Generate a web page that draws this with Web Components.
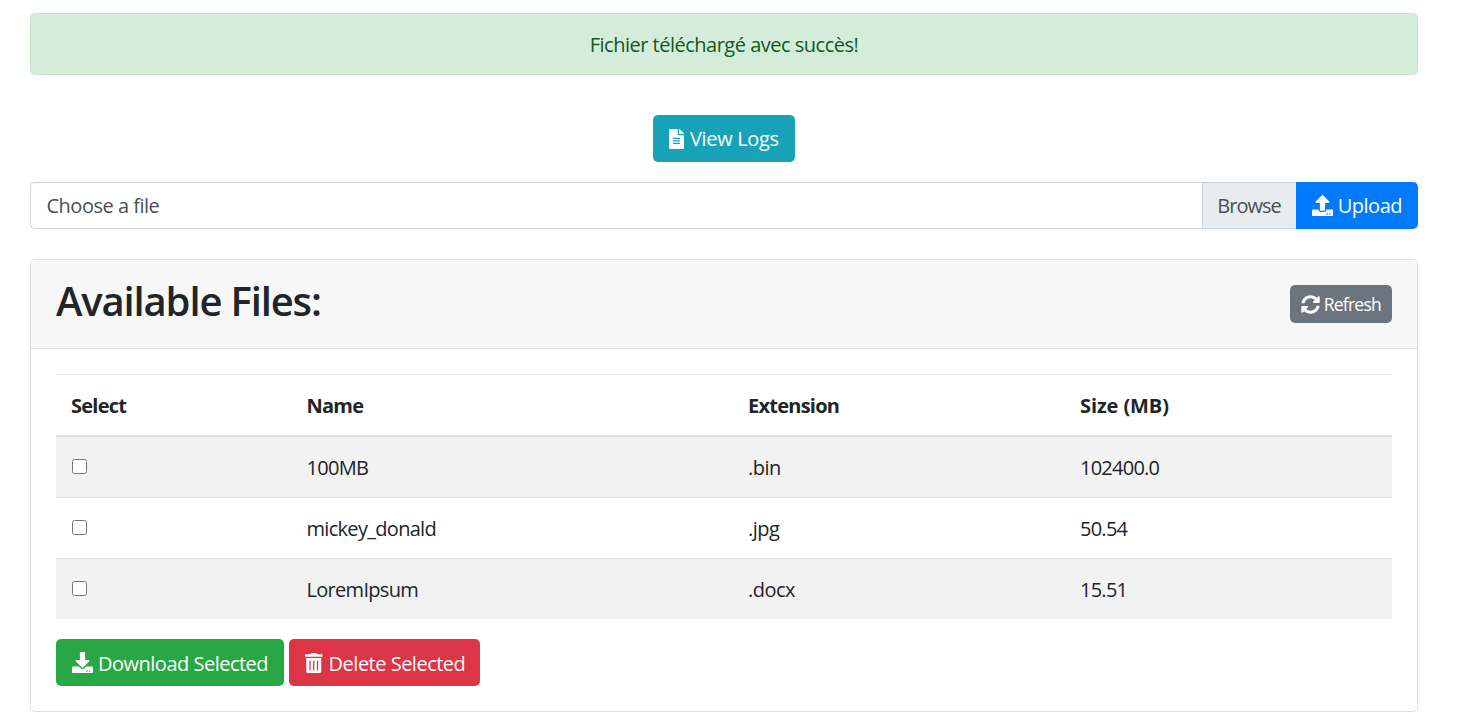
<!DOCTYPE html>
<html lang="en">
<head>
<meta charset="utf-8">
<title>Files</title>
<style>
  html, body { margin: 0; padding: 0; background: #fff; }
  body {
    padding: 13px 51px 16px 30px;
    font-family: "Open Sans", "Noto Sans", sans-serif;
    font-size: 20px;
    line-height: 30px;
    color: #212529;
    letter-spacing: -0.5px;
  }
</style>
</head>
<body>
  <status-alert>Fichier téléchargé avec succès!</status-alert>
  <logs-bar></logs-bar>
  <upload-form></upload-form>
  <files-card></files-card>

<script>
const ICONS = {
  file: { box: "0 0 384 512", d: "M224 136V0H24C10.7 0 0 10.7 0 24v464c0 13.3 10.7 24 24 24h336c13.3 0 24-10.7 24-24V160H248c-13.2 0-24-10.8-24-24zm64 236c0 6.6-5.4 12-12 12H108c-6.6 0-12-5.4-12-12v-8c0-6.6 5.4-12 12-12h168c6.6 0 12 5.4 12 12v8zm0-64c0 6.6-5.4 12-12 12H108c-6.6 0-12-5.4-12-12v-8c0-6.6 5.4-12 12-12h168c6.6 0 12 5.4 12 12v8zm0-72v8c0 6.6-5.4 12-12 12H108c-6.6 0-12-5.4-12-12v-8c0-6.6 5.4-12 12-12h168c6.6 0 12 5.4 12 12zm96-114.1v6.1H256V0h6.1c6.4 0 12.5 2.5 17 7l97.9 98c4.5 4.5 7 10.6 7 16.9z" },
  upload: { box: "0 0 512 512", size: 21, d: "M296 384h-80c-13.3 0-24-10.7-24-24V192h-87.7c-17.8 0-26.7-21.5-14.1-34.1L242.3 5.7c7.5-7.5 19.8-7.5 27.3 0l152.2 152.2c12.6 12.6 3.7 34.1-14.1 34.1H320v168c0 13.3-10.7 24-24 24zm216-8v112c0 13.3-10.7 24-24 24H24c-13.3 0-24-10.7-24-24V376c0-13.3 10.7-24 24-24h136v8c0 30.9 25.1 56 56 56h80c30.9 0 56-25.1 56-56v-8h136c13.3 0 24 10.7 24 24zm-124 88c0-11-9-20-20-20s-20 9-20 20 9 20 20 20 20-9 20-20zm64 0c0-11-9-20-20-20s-20 9-20 20 9 20 20 20 20-9 20-20z" },
  download: { box: "0 0 512 512", size: 21, d: "M216 0h80c13.3 0 24 10.7 24 24v168h87.7c17.8 0 26.7 21.5 14.1 34.1L269.7 378.3c-7.5 7.5-19.8 7.5-27.3 0L90.1 226.1c-12.6-12.6-3.7-34.1 14.1-34.1H192V24c0-13.3 10.7-24 24-24zm296 376v112c0 13.3-10.7 24-24 24H24c-13.3 0-24-10.7-24-24V376c0-13.3 10.7-24 24-24h146.7l49 49c20.1 20.1 52.5 20.1 72.6 0l49-49H488c13.3 0 24 10.7 24 24zm-124 88c0-11-9-20-20-20s-20 9-20 20 9 20 20 20 20-9 20-20zm64 0c0-11-9-20-20-20s-20 9-20 20 9 20 20 20 20-9 20-20z" },
  trash: { box: "0 0 448 512", d: "M32 464a48 48 0 0 0 48 48h288a48 48 0 0 0 48-48V128H32zm272-256a16 16 0 0 1 32 0v224a16 16 0 0 1-32 0zm-96 0a16 16 0 0 1 32 0v224a16 16 0 0 1-32 0zm-96 0a16 16 0 0 1 32 0v224a16 16 0 0 1-32 0zM432 32H312l-9.4-18.7A24 24 0 0 0 281.1 0H166.8a23.72 23.72 0 0 0-21.4 13.3L136 32H16A16 16 0 0 0 0 48v32a16 16 0 0 0 16 16h416a16 16 0 0 0 16-16V48a16 16 0 0 0-16-16z" },
  sync: { box: "0 0 512 512", d: "M370.72 133.28C339.458 104.008 298.888 87.962 255.848 88c-77.458.068-144.328 53.178-162.791 126.85-1.344 5.363-6.122 9.15-11.651 9.15H24.103c-7.498 0-13.194-6.807-11.807-14.176C33.933 94.924 134.813 8 256 8c66.448 0 126.791 26.136 171.315 68.685L463.03 40.97C478.149 25.851 504 36.559 504 57.941V192c0 13.255-10.745 24-24 24H345.941c-21.382 0-32.09-25.851-16.971-40.971l41.75-41.749zM32 296h134.059c21.382 0 32.09 25.851 16.971 40.971l-41.75 41.75c31.262 29.273 71.835 45.319 114.876 45.28 77.418-.07 144.315-53.144 162.787-126.849 1.344-5.363 6.122-9.15 11.651-9.15h57.304c7.498 0 13.194 6.807 11.807 14.176C478.067 417.076 377.187 504 256 504c-66.448 0-126.791-26.136-171.315-68.685L48.97 471.03C33.851 486.149 8 475.441 8 454.059V320c0-13.255 10.745-24 24-24z" }
};

class AppButton extends HTMLElement {
  constructor() {
    super();
    const icon = ICONS[this.getAttribute("icon")];
    const h = icon.size || 20;
    const w = icon.box.split(" ")[2] / 512 * h;
    this.attachShadow({ mode: "open" });
    this.shadowRoot.innerHTML = `
      <style>
        :host {
          display: inline-flex;
          align-items: center;
          box-sizing: border-box;
          height: 47px;
          padding: 0 16px;
          border-radius: 5px;
          color: #fff;
          background: var(--bg, #6c757d);
          cursor: pointer;
          white-space: nowrap;
        }
        :host([small]) {
          height: 38px;
          padding: 0 11px;
          font-size: 17.5px;
          letter-spacing: -0.75px;
        }
        svg {
          display: block;
          fill: currentColor;
          width: ${w}px;
          height: ${h}px;
          margin-right: var(--icon-gap, 5px);
          transform: translateY(var(--icon-shift, 0));
        }
        :host([small]) svg { width: 19px; height: 19px; margin-right: 4px; }
      </style>
      <svg viewBox="${icon.box}"><path d="${icon.d}"></path></svg><slot></slot>
    `;
  }
}
customElements.define("app-button", AppButton);

class StatusAlert extends HTMLElement {
  constructor() {
    super();
    this.attachShadow({ mode: "open" });
    this.shadowRoot.innerHTML = `
      <style>
        :host {
          display: block;
          box-sizing: border-box;
          height: 62px;
          padding: 16px 15px 14px;
          text-align: center;
          color: #155724;
          background: #d4edda;
          border: 1px solid #c3e6cb;
          border-radius: 5px;
        }
      </style>
      <slot></slot>
    `;
  }
}
customElements.define("status-alert", StatusAlert);

class LogsBar extends HTMLElement {
  constructor() {
    super();
    this.attachShadow({ mode: "open" });
    this.shadowRoot.innerHTML = `
      <style>
        :host { display: flex; justify-content: center; margin-top: 40px; }
        app-button { --bg: #17a2b8; --icon-gap: 5.6px; letter-spacing: -0.35px; }
      </style>
      <app-button icon="file">View Logs</app-button>
    `;
  }
}
customElements.define("logs-bar", LogsBar);

class UploadForm extends HTMLElement {
  constructor() {
    super();
    this.attachShadow({ mode: "open" });
    this.shadowRoot.innerHTML = `
      <style>
        :host { display: flex; height: 47px; margin-top: 20px; }
        .field {
          flex: 1;
          display: flex;
          align-items: center;
          justify-content: space-between;
          border: 1px solid #ced4da;
          border-right: 0;
          border-radius: 5px 0 0 5px;
          color: #495057;
          background: #fff;
        }
        .name { padding-left: 15.5px; }
        .browse {
          align-self: stretch;
          display: flex;
          align-items: center;
          padding: 0 15px 0 14px;
          background: #e9ecef;
          border-left: 1px solid #ced4da;
          letter-spacing: -1px;
        }
        app-button { --bg: #007bff; border-radius: 0 5px 5px 0; }
      </style>
      <div class="field">
        <span class="name">Choose a file</span>
        <span class="browse">Browse</span>
      </div>
      <app-button icon="upload">Upload</app-button>
    `;
  }
}
customElements.define("upload-form", UploadForm);

class FilesTable extends HTMLElement {
  constructor() {
    super();
    const files = [
      ["100MB", ".bin", "102400.0"],
      ["mickey_donald", ".jpg", "50.54"],
      ["LoremIpsum", ".docx", "15.51"]
    ];
    this.attachShadow({ mode: "open" });
    this.shadowRoot.innerHTML = `
      <style>
        :host { display: block; }
        table { width: 100%; table-layout: fixed; border-collapse: collapse; }
        th, td { padding: 16px 15px 14px; text-align: left; line-height: 30px; }
        th { font-weight: 700; letter-spacing: -0.75px; border-top: 1px solid #dee2e6; border-bottom: 2px solid #dee2e6; }
        th:last-child { letter-spacing: -0.1px; }
        td { border-top: 1px solid #dee2e6; }
        td:nth-child(2) { letter-spacing: -0.7px; }
        td:last-child { letter-spacing: -0.75px; }
        thead + tbody tr:first-child td { border-top: 0; }
        tbody tr:nth-child(odd) { background: #f2f2f2; }
        input { display: block; width: 15px; height: 15px; margin: 6px 0 9px 1px; }
      </style>
      <table>
        <colgroup><col style="width:235.5px"><col style="width:441.5px"><col style="width:332px"><col></colgroup>
        <thead><tr><th>Select</th><th>Name</th><th>Extension</th><th>Size (MB)</th></tr></thead>
        <tbody>
          ${files.map(f => `<tr><td><input type="checkbox"></td><td>${f[0]}</td><td>${f[1]}</td><td>${f[2]}</td></tr>`).join("")}
        </tbody>
      </table>
    `;
  }
}
customElements.define("files-table", FilesTable);

class FilesCard extends HTMLElement {
  constructor() {
    super();
    this.attachShadow({ mode: "open" });
    this.shadowRoot.innerHTML = `
      <style>
        :host {
          display: block;
          margin-top: 30px;
          border: 1px solid #dfdfdf;
          border-radius: 5px;
          overflow: hidden;
        }
        header {
          display: flex;
          align-items: center;
          justify-content: space-between;
          box-sizing: border-box;
          height: 89px;
          padding: 0 25px;
          background: #f7f7f7;
          border-bottom: 1px solid #dfdfdf;
        }
        h2 { margin: 0 0 7px; font-size: 40px; line-height: 48px; font-weight: 600; letter-spacing: -1.15px; }
        .body { padding: 25px; }
        .actions { display: flex; gap: 5px; margin-top: 20px; }
        .actions app-button { padding-top: 2px; --icon-shift: -1px; }
        .actions .delete { padding-right: 15px; --icon-gap: 6px; }
      </style>
      <header>
        <h2>Available Files:</h2>
        <app-button small icon="sync">Refresh</app-button>
      </header>
      <div class="body">
        <files-table></files-table>
        <div class="actions">
          <app-button icon="download" style="--bg:#28a745">Download Selected</app-button>
          <app-button class="delete" icon="trash" style="--bg:#dc3545">Delete Selected</app-button>
        </div>
      </div>
    `;
  }
}
customElements.define("files-card", FilesCard);
</script>
</body>
</html>
